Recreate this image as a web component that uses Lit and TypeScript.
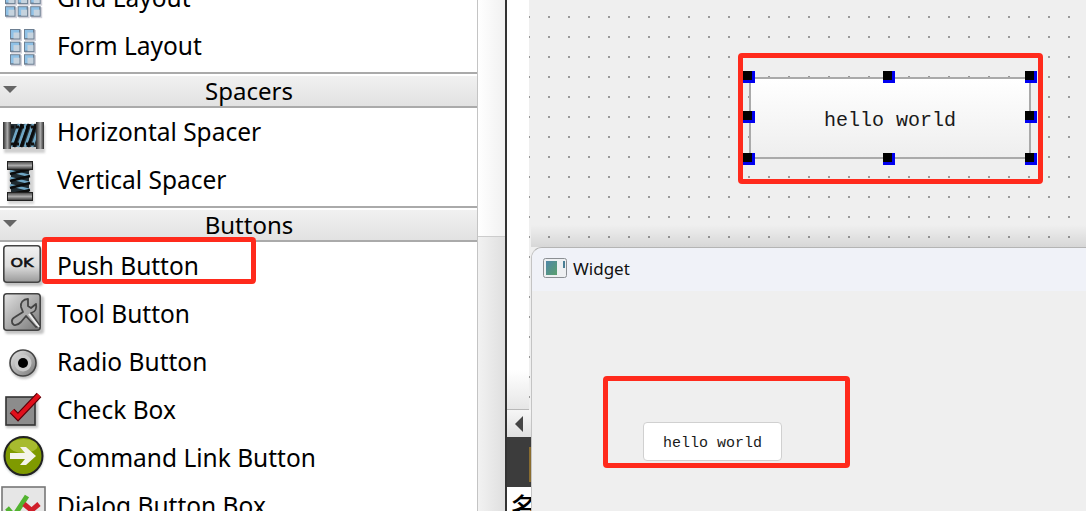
import { LitElement, html, css, svg } from "lit";
import { customElement } from "lit/decorators.js";

const blur = svg`<defs><filter id="b" x="-30%" y="-30%" width="160%" height="160%"><feGaussianBlur stdDeviation="1.3"/></filter><filter id="s" x="-30%" y="-30%" width="160%" height="160%"><feGaussianBlur stdDeviation="0.5"/></filter></defs>`;

const tile = (x: number, y: number) => svg`
  <rect x="${x + 1}" y="${y + 1}" width="11" height="11" fill="#aab" opacity=".55" filter="url(#s)"/>
  <rect x="${x}" y="${y}" width="10.5" height="10.5" fill="#6d7f92"/>
  <rect x="${x + 1}" y="${y + 1}" width="8" height="8" fill="#8fc1e6"/>
  <rect x="${x + 3.5}" y="${y + 3.5}" width="6" height="6" fill="#c6d3de"/>`;

const icons: Record<string, unknown> = {
  grid: svg`${[0, 1, 2].flatMap((r) => [0, 1, 2].map((c) => tile(5 + c * 12.6, 7 + r * 12.6)))}`,
  form: svg`${[0, 1, 2].flatMap((r) => [0, 1].map((c) => tile(10 + c * 14, 7 + r * 12.6)))}`,
  hspacer: svg`
    <rect x="4" y="17" width="41" height="28" fill="#999" opacity=".45" filter="url(#b)"/>
    <g transform="translate(0 14)">
      <rect x="9" y="2" width="29" height="23" fill="#26343c"/>
      <g fill="none" stroke-width="2.6">
        <path d="M11 25L19 2M18 25L26 2M25 25L33 2M32 25L38 8" stroke="#6fa6c4"/>
        <path d="M11 5L38 5M11 22L38 22" stroke="#111" stroke-width="3" stroke-dasharray="3 2"/>
        <path d="M14 25L22 2M21 25L29 2M28 25L36 2" stroke="#0c0c0c"/>
      </g>
      <rect x="3" y="0" width="8" height="27" fill="url(#bar)"/>
      <rect x="36" y="0" width="8" height="27" fill="url(#bar)"/>
    </g>
    <defs><linearGradient id="bar" x1="0" y1="0" x2="1" y2="0"><stop offset="0" stop-color="#2c2c2c"/><stop offset=".55" stop-color="#aaa"/><stop offset="1" stop-color="#2c2c2c"/></linearGradient></defs>`,
  vspacer: svg`
    <rect x="8" y="8" width="26" height="40" fill="#999" opacity=".4" filter="url(#b)"/>
    <rect x="11" y="12" width="18" height="26" fill="#1e2a30"/>
    <g fill="none" stroke-width="2.6">
      <path d="M10 15L30 20M10 22L30 27M10 29L30 34" stroke="#6fa6c4"/>
      <path d="M30 13L10 18M30 20L10 25M30 27L10 32M30 34L12 38" stroke="#0c0c0c"/>
    </g>
    <rect x="7.5" y="5.5" width="25" height="8" fill="url(#vbar)" stroke="#222"/>
    <rect x="7.5" y="36.5" width="25" height="8" fill="url(#vbar)" stroke="#222"/>
    <defs><linearGradient id="vbar" x1="0" y1="0" x2="0" y2="1"><stop offset="0" stop-color="#444"/><stop offset=".5" stop-color="#aaa"/><stop offset="1" stop-color="#333"/></linearGradient></defs>`,
  push: svg`
    <rect x="5" y="6" width="38" height="38" rx="3" fill="#888" opacity=".5" filter="url(#b)"/>
    <rect x="3.8" y="3.8" width="36.4" height="36.4" rx="3" fill="url(#pb)" stroke="#444" stroke-width="1.6"/>
    <text x="10.5" y="25" textLength="23" lengthAdjust="spacingAndGlyphs" class="ok">OK</text>
    <defs><linearGradient id="pb" x1="0" y1="0" x2="0" y2="1"><stop offset="0" stop-color="#f2f2f2"/><stop offset=".55" stop-color="#dedede"/><stop offset="1" stop-color="#999"/></linearGradient></defs>`,
  tool: svg`
    <rect x="5" y="6" width="39" height="38" rx="3" fill="#888" opacity=".5" filter="url(#b)"/>
    <rect x="3.8" y="3.8" width="36.4" height="36.4" rx="3" fill="url(#tb)" stroke="#444" stroke-width="1.6"/>
    <path d="M28 9C23 9 20 13 21 17L23 22L15 27C11 29 11 33 14 35C17 36 19 34 21 32L26 26L36 37L40 36L31 23C35 22 37 19 36 14L31 18L28 16Z" fill="#aaa" stroke="#444" stroke-width="1.8" stroke-linejoin="round"/>
    <path d="M29 24L39 37" stroke="#eee" stroke-width="2"/>
    <defs><linearGradient id="tb" x1="0" y1="0" x2="1" y2="1"><stop offset="0" stop-color="#e2e2e2"/><stop offset="1" stop-color="#777"/></linearGradient></defs>`,
  radio: svg`
    <circle cx="24" cy="27" r="14" fill="#888" opacity=".5" filter="url(#b)"/>
    <circle cx="23" cy="25" r="13" fill="url(#rb)" stroke="#444" stroke-width="1.6"/>
    <circle cx="23" cy="25" r="8.5" fill="#c9c9c9"/>
    <circle cx="23" cy="25" r="5" fill="#000"/>
    <defs><linearGradient id="rb" x1="0" y1="0" x2="1" y2="1"><stop offset="0" stop-color="#e6e6e6"/><stop offset="1" stop-color="#777"/></linearGradient></defs>`,
  check: svg`
    <rect x="6" y="12" width="32" height="30" fill="#888" opacity=".5" filter="url(#b)"/>
    <rect x="6" y="11" width="29" height="28" fill="#8c8c8c" stroke="#333" stroke-width="1.6"/>
    <path d="M12 25L18 31L39 9" fill="none" stroke="#5a0008" stroke-width="6.5"/>
    <path d="M12 25L18 31L39 9" fill="none" stroke="#e0101c" stroke-width="4.2"/>`,
  command: svg`
    <circle cx="23.5" cy="23" r="20" fill="#808f8f" opacity=".5" filter="url(#b)"/>
    <circle cx="23.5" cy="22" r="19" fill="#7f9a00" stroke="#222" stroke-width="2"/>
    <ellipse cx="23.5" cy="12" rx="14" ry="7" fill="#c2d24e" opacity=".6"/>
    <path d="M10 19H25L20 13H26L36 22L26 31H20L25 25H10Z" fill="#f4f4ec"/>`,
  dialog: svg`
    <rect x="2" y="5" width="43" height="43" fill="#e6e6e6" stroke="#777" stroke-width="1.6"/>
    <path d="M7 26L14 34L27 14" fill="none" stroke="#52b330" stroke-width="5"/>
    <path d="M24 22L38 34M39 22L25 34" fill="none" stroke="#cf1f2a" stroke-width="5"/>`,
};

const handles: [string, string][] = [
  ["l", "t"], ["c", "t"], ["r", "t"],
  ["l", "m"], ["r", "m"],
  ["l", "b"], ["c", "b"], ["r", "b"],
];

@customElement("app-root")
export class AppRoot extends LitElement {
  static styles = css`
    :host {
      display: grid;
      grid-template-columns: 477px 28px 2px 1fr;
      width: 1086px;
      height: 511px;
      overflow: hidden;
      background: #fff;
      position: relative;
      font-family: "Noto Sans", sans-serif;
      color: #000;
    }
    .box { height: 511px; overflow: hidden; }
    .list { background: #fff; position: relative; }
    .list-inner { margin-top: -26px; display: flex; flex-direction: column; }
    .row {
      display: flex;
      align-items: center;
      height: 48px;
      flex: none;
      font-size: 24.5px;
      white-space: nowrap;
    }
    .row svg { flex: none; width: 48px; height: 48px; margin-right: 9px; overflow: visible; }
    .row span { margin-bottom: 2px; }
    .ok { font: 400 13px "DejaVu Sans", sans-serif; stroke: #111; stroke-width: .6px; fill: #111; }
    .head {
      flex: none;
      height: 36px;
      box-sizing: border-box;
      margin-top: 2px;
      border-top: 2px solid #aaa;
      border-bottom: 2px solid #aaa;
      background: linear-gradient(#fff 2px, #f1f1f1 2px, #e2e2e2);
      display: flex;
      align-items: center;
      justify-content: center;
      padding: 1px 0 0 21px;
      font-size: 24px;
      position: relative;
      line-height: 30px;
    }
    .head::before {
      content: "";
      position: absolute;
      left: 3px;
      top: 12px;
      border-left: 7px solid transparent;
      border-right: 7px solid transparent;
      border-top: 7px solid #666;
    }
    .split {
      border-left: 1px solid #c4c4c4;
      box-sizing: border-box;
      display: flex;
      flex-direction: column;
    }
    .split-a { height: 236px; flex: none; background: linear-gradient(90deg, #fff, #f1f1f1); border-bottom: 1px solid #ccc; }
    .split-b { flex: 1; background: linear-gradient(90deg, #f2f2f2, #dfdfdf); }
    .rule { background: #333; }
    .main { display: flex; position: relative; }
    .dock { width: 22px; flex: none; display: flex; flex-direction: column; background: #fff; position: relative; z-index: 1; }
    .dock-fill { height: 410px; flex: none; background: linear-gradient(#fff 370px, #e6e6e6); border-bottom: 1px solid #b8b8b8; box-sizing: border-box; }
    .dock-arrow {
      height: 27px;
      width: 24px;
      flex: none;
      display: flex;
      align-items: center;
      padding-left: 8px;
      box-sizing: border-box;
      background: linear-gradient(#f6f6f6, #e0e0e0);
    }
    .dock-arrow i {
      display: block;
      border-top: 8px solid transparent;
      border-bottom: 8px solid transparent;
      border-right: 8px solid #444;
    }
    .dock-dark { height: 50px; width: 24px; flex: none; background: #3c3c3c; position: relative; }
    .dock-dark::after {
      content: "";
      position: absolute;
      right: 0;
      top: 10px;
      width: 2px;
      height: 35px;
      background: #8a6d30;
    }
    .dock-name {
      flex: 1;
      width: 24px;
      box-sizing: border-box;
      background: #fff;
      overflow: hidden;
      font: 500 26px "Noto Sans CJK SC", sans-serif;
      line-height: 34px;
      padding: 2px 0 0 4px;
      white-space: nowrap;
    }
    .canvas {
      flex: 1;
      background:
        linear-gradient(#efefef 16px, transparent 16px, transparent 18px, #efefef 18px) 0 0 / 20px 20px,
        linear-gradient(90deg, #999 1px, #efefef 1px, #efefef 19px, #999 19px) 0 0 / 20px 20px;
      position: relative;
    }
    .form-btn {
      position: absolute;
      left: 220px;
      top: 77px;
      width: 282px;
      height: 82px;
      box-sizing: border-box;
      border: 2px solid #aaa;
      background: linear-gradient(#fff, #eee);
      display: flex;
      align-items: center;
      justify-content: center;
      padding-top: 4px;
      color: #1a1a1a;
      font: 20px "Liberation Mono", monospace;
    }
    .handle {
      position: absolute;
      width: 12px;
      height: 12px;
      background: #0000f0;
    }
    .handle::after {
      content: "";
      position: absolute;
      left: 0;
      top: 0;
      width: 9px;
      height: 9px;
      background: #000;
    }
    .x-l { left: -8px; } .x-c { left: 132px; } .x-r { left: 274px; }
    .y-t { top: -8px; } .y-m { top: 32px; } .y-b { top: 74px; }
    .window {
      position: absolute;
      left: 531px;
      top: 247px;
      width: 600px;
      height: 300px;
      box-sizing: border-box;
      background: #efefef;
      border: 1px solid #c4c4c4;
      border-top-color: #b4b4b4;
      border-radius: 11px 0 0 0;
      display: flex;
      flex-direction: column;
    }
    .window::before {
      content: "";
      position: absolute;
      left: -1px;
      right: 0;
      top: -23px;
      height: 22px;
      background: linear-gradient(rgba(0,0,0,0), rgba(0,0,0,.1));
    }
    .title {
      height: 43px;
      flex: none;
      box-sizing: border-box;
      padding-bottom: 3px;
      background: #f0f2f8;
      border-radius: 10px 0 0 0;
      display: flex;
      align-items: center;
      gap: 6px;
      padding-left: 11px;
      font-size: 17px;
      color: #111;
    }
    .title svg { width: 24px; height: 20px; flex: none; }
    .body { flex: 1; position: relative; }
    .run-btn {
      position: absolute;
      left: 111px;
      top: 131px;
      width: 139px;
      height: 39px;
      box-sizing: border-box;
      background: #fff;
      border: 1px solid #d0d0d0;
      border-radius: 4px;
      display: flex;
      align-items: center;
      justify-content: center;
      padding-top: 4px;
      color: #1a1a1a;
      font: 15px "Liberation Mono", monospace;
    }
    .mark {
      position: absolute;
      box-sizing: border-box;
      border: 5px solid #ff2a1c;
      border-radius: 4px;
      pointer-events: none;
    }
    .m1 { left: 738px; top: 53px; width: 305px; height: 131px; }
    .m2 { left: 42px; top: 237px; width: 214px; height: 47px; }
    .m3 { left: 603px; top: 376px; width: 247px; height: 92px; }
  `;

  private row(icon: string, label: string) {
    return html`<div class="row"><svg viewBox="0 0 48 48">${blur}${icons[icon]}</svg><span>${label}</span></div>`;
  }

  render() {
    return html`
      <div class="box list">
        <div class="list-inner">
          ${this.row("grid", "Grid Layout")}
          ${this.row("form", "Form Layout")}
          <div class="head">Spacers</div>
          ${this.row("hspacer", "Horizontal Spacer")}
          ${this.row("vspacer", "Vertical Spacer")}
          <div class="head">Buttons</div>
          ${this.row("push", "Push Button")}
          ${this.row("tool", "Tool Button")}
          ${this.row("radio", "Radio Button")}
          ${this.row("check", "Check Box")}
          ${this.row("command", "Command Link Button")}
          ${this.row("dialog", "Dialog Button Box")}
        </div>
      </div>
      <div class="box split"><div class="split-a"></div><div class="split-b"></div></div>
      <div class="box rule"></div>
      <div class="box main">
        <div class="dock">
          <div class="dock-fill"></div>
          <div class="dock-arrow"><i></i></div>
          <div class="dock-dark"></div>
          <div class="dock-name">名</div>
        </div>
        <div class="canvas">
          <div class="form-btn">
            hello world
            ${handles.map(([x, y]) => html`<span class="handle x-${x} y-${y}"></span>`)}
          </div>
        </div>
      </div>
      <div class="window">
        <div class="title">
          <svg viewBox="0 0 24 20">
            <defs><linearGradient id="w" x1="0" y1="0" x2="1" y2="1"><stop offset="0" stop-color="#4f86a8"/><stop offset="1" stop-color="#5aa06c"/></linearGradient></defs>
            <rect x=".5" y=".5" width="23" height="19" rx="2" fill="#eef0f2" stroke="#8b8f93"/>
            <rect x="3" y="3" width="11" height="14" fill="url(#w)"/>
            <rect x="20" y="3" width="2" height="7" fill="#4a7f95"/>
          </svg>
          Widget
        </div>
        <div class="body"><div class="run-btn">hello world</div></div>
      </div>
      <div class="mark m1"></div>
      <div class="mark m2"></div>
      <div class="mark m3"></div>
    `;
  }
}
